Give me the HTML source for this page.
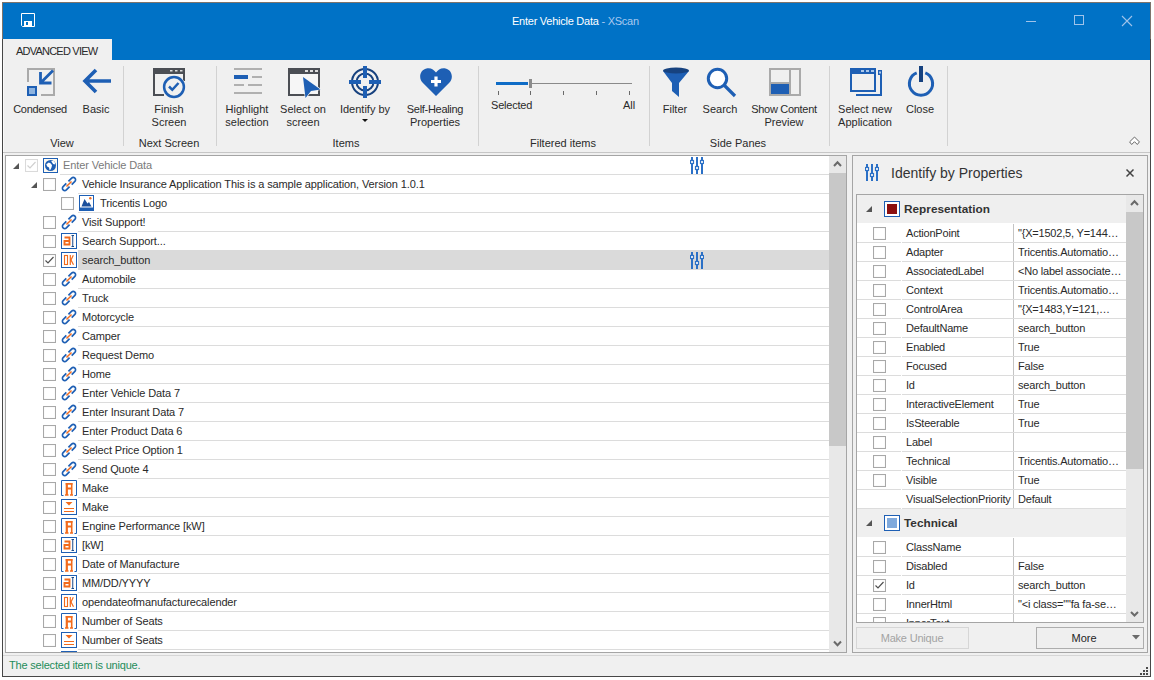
<!DOCTYPE html><html><head><meta charset="utf-8"><style>
html,body{margin:0;padding:0;background:#fff;width:1154px;height:680px;overflow:hidden;position:relative;font-family:"Liberation Sans", sans-serif;}
.t{position:absolute;white-space:nowrap;line-height:0;}
.t.c{width:200px;text-align:center;}
.t::before{content:"";}
svg{display:block}
</style></head><body>
<div style="position:absolute;left:2px;top:2px;width:1149px;height:675px;background:#f0f0f0;box-sizing:border-box;border:1px solid #474747;"></div>
<div style="position:absolute;left:2px;top:2px;width:1149px;height:1px;background:#7d746c;"></div>
<div style="position:absolute;left:2px;top:2px;width:1px;height:37px;background:#7d746c;"></div>
<div style="position:absolute;left:1150px;top:2px;width:1px;height:37px;background:#7d746c;"></div>
<div style="position:absolute;left:3px;top:39px;width:1px;height:613px;background:#fbfbfb;"></div>
<div style="position:absolute;left:3px;top:3px;width:1147px;height:57px;background:#0072c6;"></div>
<svg style="position:absolute;left:21px;top:13px" width="15" height="14" viewBox="0 0 15 14"><path d="M0.5 0.5H13.5V13.5H1.5L0.5 12.5Z" fill="none" stroke="#fff" stroke-width="1"/><rect x="3" y="8" width="8" height="5" fill="#fff"/><rect x="5" y="9" width="2" height="3" fill="#0072c6"/></svg>
<div class="t" style="left:512px;top:21.19px;font-size:11px;color:#ffffff;font-weight:normal;letter-spacing:-0.25px;">Enter Vehicle Data <span style="color:#a9c9ef">- XScan</span></div>
<div style="position:absolute;left:1026px;top:21px;width:10px;height:1px;background:#9fc3ea;"></div>
<div style="position:absolute;left:1074px;top:15px;width:10px;height:10px;box-sizing:border-box;border:1px solid #9fc3ea;"></div>
<svg style="position:absolute;left:1121px;top:15px" width="12" height="12" viewBox="0 0 12 12"><path d="M1 1L11 11M11 1L1 11" stroke="#9fc3ea" stroke-width="1.1"/></svg>
<div style="position:absolute;left:3px;top:39px;width:109px;height:21px;background:#f0f0f0;"></div>
<div class="t" style="left:16px;top:51.19px;font-size:11px;color:#2a2a2a;font-weight:normal;letter-spacing:-0.78px;">ADVANCED VIEW</div>
<div style="position:absolute;left:3px;top:152px;width:1147px;height:1px;background:#c6c6c6;"></div>
<div style="position:absolute;left:123px;top:66px;width:1px;height:80px;background:#d2d2d2;"></div>
<div style="position:absolute;left:216px;top:66px;width:1px;height:80px;background:#d2d2d2;"></div>
<div style="position:absolute;left:478px;top:66px;width:1px;height:80px;background:#d2d2d2;"></div>
<div style="position:absolute;left:649px;top:66px;width:1px;height:80px;background:#d2d2d2;"></div>
<div style="position:absolute;left:829px;top:66px;width:1px;height:80px;background:#d2d2d2;"></div>
<div style="position:absolute;left:947px;top:66px;width:1px;height:80px;background:#d2d2d2;"></div>
<svg style="position:absolute;left:27px;top:68px" width="29" height="29" viewBox="0 0 29 29"><path d="M1 14V1H27V27H14" fill="none" stroke="#aaaaaa" stroke-width="2"/><rect x="1" y="19" width="8" height="8" fill="#8db3df" stroke="#1e5fb4" stroke-width="2"/><path d="M13.5 4V15H24.5M13.5 15L26 2.5" fill="none" stroke="#1e5fb4" stroke-width="2.8"/></svg>
<svg style="position:absolute;left:82px;top:68px" width="30" height="28" viewBox="0 0 30 28"><path d="M14 2L3 13L14 24M3 13H29" fill="none" stroke="#1e5fb4" stroke-width="3.6"/></svg>
<svg style="position:absolute;left:152px;top:67px" width="34" height="32" viewBox="0 0 34 32"><path d="M32 6V14M12 28H2V6" fill="none" stroke="#4b4e54" stroke-width="2"/><rect x="1" y="1" width="32" height="6" fill="#4b4e54"/><rect x="18" y="3" width="2.5" height="1.5" fill="#ddd"/><rect x="23" y="3" width="2.5" height="1.5" fill="#ddd"/><rect x="28" y="3" width="2.5" height="1.5" fill="#ddd"/><circle cx="22" cy="20" r="11.5" fill="#f0f0f0"/><circle cx="22" cy="20" r="9.9" fill="#f0f0f0" stroke="#1e5fb4" stroke-width="2.5"/><path d="M17 19.5L20.3 22.8L26.5 16" fill="none" stroke="#1e5fb4" stroke-width="2.5"/></svg>
<svg style="position:absolute;left:234px;top:68px" width="29" height="27" viewBox="0 0 29 27"><rect x="0" y="0" width="28" height="2" fill="#b0b0b0"/><rect x="0" y="7" width="14" height="4" fill="#1e5fb4"/><rect x="18" y="8" width="10" height="2" fill="#b0b0b0"/><rect x="0" y="16" width="10" height="2" fill="#b0b0b0"/><rect x="14" y="16" width="14" height="2" fill="#b0b0b0"/><rect x="0" y="24" width="28" height="2" fill="#b0b0b0"/></svg>
<svg style="position:absolute;left:287px;top:67px" width="35" height="34" viewBox="0 0 35 34"><rect x="2" y="2" width="30" height="26" fill="#f6f6f6" stroke="#4b4e54" stroke-width="2"/><rect x="1" y="1" width="32" height="6" fill="#4b4e54"/><rect x="18" y="3" width="3" height="2" fill="#ddd"/><rect x="23" y="3" width="3" height="2" fill="#ddd"/><rect x="28" y="3" width="3" height="2" fill="#ddd"/><path d="M16 10L33.5 22.4L24 24L18.5 31Z" fill="#1e5fb4" stroke="#f4f4f4" stroke-width="1.3" stroke-linejoin="round" paint-order="stroke"/></svg>
<svg style="position:absolute;left:348px;top:65px" width="34" height="34" viewBox="0 0 34 34"><circle cx="17" cy="17" r="13" fill="none" stroke="#17427f" stroke-width="2"/><circle cx="17" cy="17" r="8.5" fill="none" stroke="#17427f" stroke-width="2"/><path d="M17 1V13M17 21V33M1 17H13M21 17H33" stroke="#1e5fb4" stroke-width="4"/></svg>
<svg style="position:absolute;left:362px;top:119px" width="6" height="4" viewBox="0 0 6 4"><path d="M0 0H6L3 3Z" fill="#111"/></svg>
<svg style="position:absolute;left:419px;top:67px" width="34" height="30" viewBox="0 0 34 30"><path d="M17 29L3.5 15.5C-0.5 11.5 0.5 3 7.5 1.5C12 0.6 15 3 17 5.5C19 3 22 0.6 26.5 1.5C33.5 3 34.5 11.5 30.5 15.5Z" fill="#1e5fb4"/><path d="M17 9.5V19.5M12 14.5H22" stroke="#fff" stroke-width="3.2"/></svg>
<div style="position:absolute;left:496px;top:82px;width:32px;height:3px;background:#0f6cc6;"></div>
<div style="position:absolute;left:532px;top:83px;width:100px;height:1px;background:#8a8a8a;"></div>
<div style="position:absolute;left:529px;top:79px;width:3px;height:9px;background:#8c8c8c;"></div>
<div style="position:absolute;left:498px;top:91px;width:1px;height:4px;background:#6a6a6a;"></div>
<div style="position:absolute;left:530px;top:91px;width:1px;height:4px;background:#6a6a6a;"></div>
<div style="position:absolute;left:563px;top:91px;width:1px;height:4px;background:#6a6a6a;"></div>
<div style="position:absolute;left:596px;top:91px;width:1px;height:4px;background:#6a6a6a;"></div>
<div style="position:absolute;left:629px;top:91px;width:1px;height:4px;background:#6a6a6a;"></div>
<svg style="position:absolute;left:662px;top:67px" width="28" height="30" viewBox="0 0 28 30"><path d="M1 4L10 16V24L17 30V16L27 4Z" fill="#1e5fb4"/><ellipse cx="14" cy="3.5" rx="13" ry="3" fill="#17427f"/></svg>
<svg style="position:absolute;left:705px;top:66px" width="32" height="32" viewBox="0 0 32 32"><circle cx="12.5" cy="12.5" r="9.2" fill="#fff" stroke="#1e5fb4" stroke-width="3"/><path d="M19 19L30 30" stroke="#1e5fb4" stroke-width="3.2"/></svg>
<svg style="position:absolute;left:769px;top:68px" width="33" height="29" viewBox="0 0 33 29"><rect x="1" y="1" width="30" height="26" fill="none" stroke="#aaaaaa" stroke-width="2"/><path d="M21 1V27M2 15H20" stroke="#aaaaaa" stroke-width="2"/><rect x="2" y="16" width="18" height="10" fill="#1e5fb4"/></svg>
<svg style="position:absolute;left:849px;top:67px" width="34" height="30" viewBox="0 0 34 30"><rect x="2" y="2" width="24" height="22" fill="none" stroke="#1e5fb4" stroke-width="2"/><rect x="1" y="1" width="26" height="6" fill="#1e5fb4"/><rect x="12" y="3" width="3" height="2" fill="#a9c6ea"/><rect x="17" y="3" width="3" height="2" fill="#a9c6ea"/><rect x="22" y="3" width="3" height="2" fill="#a9c6ea"/><rect x="31" y="3" width="2" height="26" fill="#1e5fb4"/><rect x="29" y="3" width="4" height="5" fill="#1e5fb4"/><rect x="30" y="4.5" width="2" height="2" fill="#a9c6ea"/><rect x="7" y="27" width="26" height="2" fill="#1e5fb4"/></svg>
<svg style="position:absolute;left:905px;top:64px" width="32" height="34" viewBox="0 0 32 34"><path d="M11.7 8.8A11.6 11.6 0 1 0 20.3 8.8" fill="none" stroke="#1e5fb4" stroke-width="3"/><rect x="14" y="2" width="4" height="16" fill="#17427f"/></svg>
<div class="t c" style="left:-60px;top:109.19px;font-size:11px;color:#2a2a2a;letter-spacing:-0.3px;">Condensed</div>
<div class="t c" style="left:-4px;top:109.19px;font-size:11px;color:#2a2a2a;">Basic</div>
<div class="t c" style="left:69px;top:109.19px;font-size:11px;color:#2a2a2a;">Finish</div>
<div class="t c" style="left:69px;top:122.19px;font-size:11px;color:#2a2a2a;">Screen</div>
<div class="t c" style="left:147px;top:109.19px;font-size:11px;color:#2a2a2a;">Highlight</div>
<div class="t c" style="left:147px;top:122.19px;font-size:11px;color:#2a2a2a;">selection</div>
<div class="t c" style="left:203px;top:109.19px;font-size:11px;color:#2a2a2a;">Select on</div>
<div class="t c" style="left:203px;top:122.19px;font-size:11px;color:#2a2a2a;">screen</div>
<div class="t c" style="left:265px;top:109.19px;font-size:11px;color:#2a2a2a;">Identify by</div>
<div class="t c" style="left:335px;top:109.19px;font-size:11px;color:#2a2a2a;letter-spacing:-0.3px;">Self-Healing</div>
<div class="t c" style="left:335px;top:122.19px;font-size:11px;color:#2a2a2a;">Properties</div>
<div class="t" style="left:491px;top:105.19px;font-size:11px;color:#2a2a2a;font-weight:normal;letter-spacing:-0.2px;">Selected</div>
<div class="t" style="left:623px;top:105.19px;font-size:11px;color:#2a2a2a;font-weight:normal;">All</div>
<div class="t c" style="left:575px;top:109.19px;font-size:11px;color:#2a2a2a;">Filter</div>
<div class="t c" style="left:620px;top:109.19px;font-size:11px;color:#2a2a2a;">Search</div>
<div class="t c" style="left:684px;top:109.19px;font-size:11px;color:#2a2a2a;letter-spacing:-0.3px;">Show Content</div>
<div class="t c" style="left:684px;top:122.19px;font-size:11px;color:#2a2a2a;">Preview</div>
<div class="t c" style="left:765px;top:109.19px;font-size:11px;color:#2a2a2a;">Select new</div>
<div class="t c" style="left:765px;top:122.19px;font-size:11px;color:#2a2a2a;">Application</div>
<div class="t c" style="left:820px;top:109.19px;font-size:11px;color:#2a2a2a;">Close</div>
<div class="t c" style="left:-38px;top:143.19px;font-size:11px;color:#2a2a2a;">View</div>
<div class="t c" style="left:69px;top:143.19px;font-size:11px;color:#2a2a2a;">Next Screen</div>
<div class="t c" style="left:246px;top:143.19px;font-size:11px;color:#2a2a2a;">Items</div>
<div class="t c" style="left:463px;top:143.19px;font-size:11px;color:#2a2a2a;">Filtered items</div>
<div class="t c" style="left:638px;top:143.19px;font-size:11px;color:#2a2a2a;">Side Panes</div>
<svg style="position:absolute;left:1126px;top:134px" width="17" height="14" viewBox="0 0 17 14"><path d="M8.5 3L13.4 7.9L11.3 10.5L8.5 7.7L5.7 10.5L3.6 7.9Z" fill="#fff" stroke="#666" stroke-width="1"/></svg>
<div style="position:absolute;left:5px;top:155px;width:842px;height:498px;background:#fff;box-sizing:border-box;border:1px solid #a5a5a5;"></div>
<div style="position:absolute;left:829px;top:156px;width:17px;height:496px;background:#e8e8e8;"></div>
<div style="position:absolute;left:829px;top:173px;width:17px;height:273px;background:#c8c8c8;"></div>
<svg style="position:absolute;left:833px;top:159px" width="9" height="9" viewBox="0 0 9 9"><path d="M1 7L4.5 3.2L8 7" fill="none" stroke="#6a6a6a" stroke-width="2"/></svg>
<svg style="position:absolute;left:833px;top:640px" width="9" height="9" viewBox="0 0 9 9"><path d="M1 1.5L4.5 5.3L8 1.5" fill="none" stroke="#6a6a6a" stroke-width="2"/></svg>
<div style="position:absolute;left:6px;top:156px;width:823px;height:496px;overflow:hidden">
<div style="position:absolute;left:54px;top:18px;width:769px;height:1px;background:#dcdcdc;"></div>
<svg style="position:absolute;left:7px;top:7px" width="6" height="6" viewBox="0 0 6 6"><path d="M6 0V6H0Z" fill="#555"/></svg>
<svg style="position:absolute;left:19px;top:3px" width="13" height="13" viewBox="0 0 13 13"><rect x="0.5" y="0.5" width="12" height="12" fill="#fff" stroke="#dadada" stroke-width="1.1"/><path d="M2.5 6.5L5 9L10.5 3" fill="none" stroke="#d0d0d0" stroke-width="1.2"/></svg>
<svg style="position:absolute;left:37px;top:2px" width="15" height="15" viewBox="0 0 15 15"><rect x="0.5" y="0.5" width="14" height="14" fill="#fffaf0" stroke="#1e5fb4" stroke-width="1"/><circle cx="7.5" cy="7.5" r="5.5" fill="#1e5fb4"/><path d="M3.3 6.2L5.8 4.6L7.8 5.6L9 7.2L8.6 9.2L7.6 11.6L6.6 12.2L6 9.6L4.2 8.6Z M8.2 3.1L10.6 2.9L12.3 5.1L11.6 6.6L10.1 6.1L9.1 4.6Z" fill="#fff"/></svg>
<div class="t" style="left:57px;top:9.19px;font-size:11px;color:#7a7a7a;font-weight:normal;letter-spacing:-0.12px;">Enter Vehicle Data</div>
<div style="position:absolute;left:72px;top:37px;width:751px;height:1px;background:#dcdcdc;"></div>
<svg style="position:absolute;left:25px;top:26px" width="6" height="6" viewBox="0 0 6 6"><path d="M6 0V6H0Z" fill="#555"/></svg>
<svg style="position:absolute;left:37px;top:22px" width="13" height="13" viewBox="0 0 13 13"><rect x="0.5" y="0.5" width="12" height="12" fill="#fff" stroke="#a8a8a8" stroke-width="1.1"/></svg>
<svg style="position:absolute;left:55px;top:20px" width="16" height="16" viewBox="0 0 16 16"><g transform="translate(8 8) rotate(-45)"><path d="M1.5 -2.3H6A2.3 2.3 0 0 1 6 2.3H1.5M-1.5 2.3H-6A2.3 2.3 0 0 1 -6 -2.3H-1.5" fill="none" stroke="#1e5fb4" stroke-width="1.7"/><path d="M-3.6 0H3.6" stroke="#f26b1d" stroke-width="1.5"/></g></svg>
<div class="t" style="left:76px;top:28.19px;font-size:11px;color:#2a2a2a;font-weight:normal;letter-spacing:-0.12px;">Vehicle Insurance Application This is a sample application, Version 1.0.1</div>
<div style="position:absolute;left:72px;top:56px;width:751px;height:1px;background:#dcdcdc;"></div>
<svg style="position:absolute;left:55px;top:41px" width="13" height="13" viewBox="0 0 13 13"><rect x="0.5" y="0.5" width="12" height="12" fill="#fff" stroke="#a8a8a8" stroke-width="1.1"/></svg>
<svg style="position:absolute;left:73px;top:39px" width="15" height="16" viewBox="0 0 15 16"><rect x="0.5" y="0.5" width="14" height="15" fill="#fff" stroke="#1e5fb4" stroke-width="1"/><rect x="0" y="12.5" width="15" height="3.5" fill="#1e5fb4"/><path d="M2.5 11.5L5.5 4L8.5 8.5L10 7L12.5 11.5Z" fill="#1a4f9c"/><circle cx="11.3" cy="3.3" r="1.2" fill="#f26b1d"/></svg>
<div class="t" style="left:94px;top:47.19px;font-size:11px;color:#2a2a2a;font-weight:normal;letter-spacing:-0.12px;">Tricentis Logo</div>
<div style="position:absolute;left:72px;top:75px;width:751px;height:1px;background:#dcdcdc;"></div>
<svg style="position:absolute;left:37px;top:60px" width="13" height="13" viewBox="0 0 13 13"><rect x="0.5" y="0.5" width="12" height="12" fill="#fff" stroke="#a8a8a8" stroke-width="1.1"/></svg>
<svg style="position:absolute;left:55px;top:58px" width="16" height="16" viewBox="0 0 16 16"><g transform="translate(8 8) rotate(-45)"><path d="M1.5 -2.3H6A2.3 2.3 0 0 1 6 2.3H1.5M-1.5 2.3H-6A2.3 2.3 0 0 1 -6 -2.3H-1.5" fill="none" stroke="#1e5fb4" stroke-width="1.7"/><path d="M-3.6 0H3.6" stroke="#f26b1d" stroke-width="1.5"/></g></svg>
<div class="t" style="left:76px;top:66.19px;font-size:11px;color:#2a2a2a;font-weight:normal;letter-spacing:-0.12px;">Visit Support!</div>
<div style="position:absolute;left:72px;top:94px;width:751px;height:1px;background:#dcdcdc;"></div>
<svg style="position:absolute;left:37px;top:79px" width="13" height="13" viewBox="0 0 13 13"><rect x="0.5" y="0.5" width="12" height="12" fill="#fff" stroke="#a8a8a8" stroke-width="1.1"/></svg>
<svg style="position:absolute;left:55px;top:77px" width="16" height="16" viewBox="0 0 16 16"><rect x="0.5" y="0.5" width="15" height="15" fill="#fff" stroke="#1e5fb4" stroke-width="1"/><path d="M3.5 4.5H8.5V11.5H3.5V8H8" fill="none" stroke="#f26b1d" stroke-width="1.9"/><path d="M10.5 2.5H13M11.75 2.5V13.5M10.5 13.5H13" fill="none" stroke="#1a4a8a" stroke-width="1"/></svg>
<div class="t" style="left:76px;top:85.19px;font-size:11px;color:#2a2a2a;font-weight:normal;letter-spacing:-0.12px;">Search Support...</div>
<div style="position:absolute;left:72px;top:94px;width:751px;height:20px;background:#dadada;"></div>
<svg style="position:absolute;left:37px;top:98px" width="13" height="13" viewBox="0 0 13 13"><rect x="0.5" y="0.5" width="12" height="12" fill="#fff" stroke="#a8a8a8" stroke-width="1.1"/><path d="M2.5 6.5L5 9L10.5 3" fill="none" stroke="#505050" stroke-width="1.2"/></svg>
<svg style="position:absolute;left:55px;top:96px" width="16" height="16" viewBox="0 0 16 16"><rect x="0.5" y="0.5" width="15" height="15" fill="#fff" stroke="#1e5fb4" stroke-width="1"/><rect x="3.5" y="3.5" width="3" height="9" fill="none" stroke="#f26b1d" stroke-width="1.1"/><path d="M9.3 3V13M12.3 3.2L10 8L12.5 12.8" fill="none" stroke="#f26b1d" stroke-width="1.2"/></svg>
<div class="t" style="left:76px;top:104.19px;font-size:11px;color:#2a2a2a;font-weight:normal;letter-spacing:-0.12px;">search_button</div>
<div style="position:absolute;left:72px;top:132px;width:751px;height:1px;background:#dcdcdc;"></div>
<svg style="position:absolute;left:37px;top:117px" width="13" height="13" viewBox="0 0 13 13"><rect x="0.5" y="0.5" width="12" height="12" fill="#fff" stroke="#a8a8a8" stroke-width="1.1"/></svg>
<svg style="position:absolute;left:55px;top:115px" width="16" height="16" viewBox="0 0 16 16"><g transform="translate(8 8) rotate(-45)"><path d="M1.5 -2.3H6A2.3 2.3 0 0 1 6 2.3H1.5M-1.5 2.3H-6A2.3 2.3 0 0 1 -6 -2.3H-1.5" fill="none" stroke="#1e5fb4" stroke-width="1.7"/><path d="M-3.6 0H3.6" stroke="#f26b1d" stroke-width="1.5"/></g></svg>
<div class="t" style="left:76px;top:123.19px;font-size:11px;color:#2a2a2a;font-weight:normal;letter-spacing:-0.12px;">Automobile</div>
<div style="position:absolute;left:72px;top:151px;width:751px;height:1px;background:#dcdcdc;"></div>
<svg style="position:absolute;left:37px;top:136px" width="13" height="13" viewBox="0 0 13 13"><rect x="0.5" y="0.5" width="12" height="12" fill="#fff" stroke="#a8a8a8" stroke-width="1.1"/></svg>
<svg style="position:absolute;left:55px;top:134px" width="16" height="16" viewBox="0 0 16 16"><g transform="translate(8 8) rotate(-45)"><path d="M1.5 -2.3H6A2.3 2.3 0 0 1 6 2.3H1.5M-1.5 2.3H-6A2.3 2.3 0 0 1 -6 -2.3H-1.5" fill="none" stroke="#1e5fb4" stroke-width="1.7"/><path d="M-3.6 0H3.6" stroke="#f26b1d" stroke-width="1.5"/></g></svg>
<div class="t" style="left:76px;top:142.19px;font-size:11px;color:#2a2a2a;font-weight:normal;letter-spacing:-0.12px;">Truck</div>
<div style="position:absolute;left:72px;top:170px;width:751px;height:1px;background:#dcdcdc;"></div>
<svg style="position:absolute;left:37px;top:155px" width="13" height="13" viewBox="0 0 13 13"><rect x="0.5" y="0.5" width="12" height="12" fill="#fff" stroke="#a8a8a8" stroke-width="1.1"/></svg>
<svg style="position:absolute;left:55px;top:153px" width="16" height="16" viewBox="0 0 16 16"><g transform="translate(8 8) rotate(-45)"><path d="M1.5 -2.3H6A2.3 2.3 0 0 1 6 2.3H1.5M-1.5 2.3H-6A2.3 2.3 0 0 1 -6 -2.3H-1.5" fill="none" stroke="#1e5fb4" stroke-width="1.7"/><path d="M-3.6 0H3.6" stroke="#f26b1d" stroke-width="1.5"/></g></svg>
<div class="t" style="left:76px;top:161.19px;font-size:11px;color:#2a2a2a;font-weight:normal;letter-spacing:-0.12px;">Motorcycle</div>
<div style="position:absolute;left:72px;top:189px;width:751px;height:1px;background:#dcdcdc;"></div>
<svg style="position:absolute;left:37px;top:174px" width="13" height="13" viewBox="0 0 13 13"><rect x="0.5" y="0.5" width="12" height="12" fill="#fff" stroke="#a8a8a8" stroke-width="1.1"/></svg>
<svg style="position:absolute;left:55px;top:172px" width="16" height="16" viewBox="0 0 16 16"><g transform="translate(8 8) rotate(-45)"><path d="M1.5 -2.3H6A2.3 2.3 0 0 1 6 2.3H1.5M-1.5 2.3H-6A2.3 2.3 0 0 1 -6 -2.3H-1.5" fill="none" stroke="#1e5fb4" stroke-width="1.7"/><path d="M-3.6 0H3.6" stroke="#f26b1d" stroke-width="1.5"/></g></svg>
<div class="t" style="left:76px;top:180.19px;font-size:11px;color:#2a2a2a;font-weight:normal;letter-spacing:-0.12px;">Camper</div>
<div style="position:absolute;left:72px;top:208px;width:751px;height:1px;background:#dcdcdc;"></div>
<svg style="position:absolute;left:37px;top:193px" width="13" height="13" viewBox="0 0 13 13"><rect x="0.5" y="0.5" width="12" height="12" fill="#fff" stroke="#a8a8a8" stroke-width="1.1"/></svg>
<svg style="position:absolute;left:55px;top:191px" width="16" height="16" viewBox="0 0 16 16"><g transform="translate(8 8) rotate(-45)"><path d="M1.5 -2.3H6A2.3 2.3 0 0 1 6 2.3H1.5M-1.5 2.3H-6A2.3 2.3 0 0 1 -6 -2.3H-1.5" fill="none" stroke="#1e5fb4" stroke-width="1.7"/><path d="M-3.6 0H3.6" stroke="#f26b1d" stroke-width="1.5"/></g></svg>
<div class="t" style="left:76px;top:199.19px;font-size:11px;color:#2a2a2a;font-weight:normal;letter-spacing:-0.12px;">Request Demo</div>
<div style="position:absolute;left:72px;top:227px;width:751px;height:1px;background:#dcdcdc;"></div>
<svg style="position:absolute;left:37px;top:212px" width="13" height="13" viewBox="0 0 13 13"><rect x="0.5" y="0.5" width="12" height="12" fill="#fff" stroke="#a8a8a8" stroke-width="1.1"/></svg>
<svg style="position:absolute;left:55px;top:210px" width="16" height="16" viewBox="0 0 16 16"><g transform="translate(8 8) rotate(-45)"><path d="M1.5 -2.3H6A2.3 2.3 0 0 1 6 2.3H1.5M-1.5 2.3H-6A2.3 2.3 0 0 1 -6 -2.3H-1.5" fill="none" stroke="#1e5fb4" stroke-width="1.7"/><path d="M-3.6 0H3.6" stroke="#f26b1d" stroke-width="1.5"/></g></svg>
<div class="t" style="left:76px;top:218.19px;font-size:11px;color:#2a2a2a;font-weight:normal;letter-spacing:-0.12px;">Home</div>
<div style="position:absolute;left:72px;top:246px;width:751px;height:1px;background:#dcdcdc;"></div>
<svg style="position:absolute;left:37px;top:231px" width="13" height="13" viewBox="0 0 13 13"><rect x="0.5" y="0.5" width="12" height="12" fill="#fff" stroke="#a8a8a8" stroke-width="1.1"/></svg>
<svg style="position:absolute;left:55px;top:229px" width="16" height="16" viewBox="0 0 16 16"><g transform="translate(8 8) rotate(-45)"><path d="M1.5 -2.3H6A2.3 2.3 0 0 1 6 2.3H1.5M-1.5 2.3H-6A2.3 2.3 0 0 1 -6 -2.3H-1.5" fill="none" stroke="#1e5fb4" stroke-width="1.7"/><path d="M-3.6 0H3.6" stroke="#f26b1d" stroke-width="1.5"/></g></svg>
<div class="t" style="left:76px;top:237.19px;font-size:11px;color:#2a2a2a;font-weight:normal;letter-spacing:-0.12px;">Enter Vehicle Data 7</div>
<div style="position:absolute;left:72px;top:265px;width:751px;height:1px;background:#dcdcdc;"></div>
<svg style="position:absolute;left:37px;top:250px" width="13" height="13" viewBox="0 0 13 13"><rect x="0.5" y="0.5" width="12" height="12" fill="#fff" stroke="#a8a8a8" stroke-width="1.1"/></svg>
<svg style="position:absolute;left:55px;top:248px" width="16" height="16" viewBox="0 0 16 16"><g transform="translate(8 8) rotate(-45)"><path d="M1.5 -2.3H6A2.3 2.3 0 0 1 6 2.3H1.5M-1.5 2.3H-6A2.3 2.3 0 0 1 -6 -2.3H-1.5" fill="none" stroke="#1e5fb4" stroke-width="1.7"/><path d="M-3.6 0H3.6" stroke="#f26b1d" stroke-width="1.5"/></g></svg>
<div class="t" style="left:76px;top:256.19px;font-size:11px;color:#2a2a2a;font-weight:normal;letter-spacing:-0.12px;">Enter Insurant Data 7</div>
<div style="position:absolute;left:72px;top:284px;width:751px;height:1px;background:#dcdcdc;"></div>
<svg style="position:absolute;left:37px;top:269px" width="13" height="13" viewBox="0 0 13 13"><rect x="0.5" y="0.5" width="12" height="12" fill="#fff" stroke="#a8a8a8" stroke-width="1.1"/></svg>
<svg style="position:absolute;left:55px;top:267px" width="16" height="16" viewBox="0 0 16 16"><g transform="translate(8 8) rotate(-45)"><path d="M1.5 -2.3H6A2.3 2.3 0 0 1 6 2.3H1.5M-1.5 2.3H-6A2.3 2.3 0 0 1 -6 -2.3H-1.5" fill="none" stroke="#1e5fb4" stroke-width="1.7"/><path d="M-3.6 0H3.6" stroke="#f26b1d" stroke-width="1.5"/></g></svg>
<div class="t" style="left:76px;top:275.19px;font-size:11px;color:#2a2a2a;font-weight:normal;letter-spacing:-0.12px;">Enter Product Data 6</div>
<div style="position:absolute;left:72px;top:303px;width:751px;height:1px;background:#dcdcdc;"></div>
<svg style="position:absolute;left:37px;top:288px" width="13" height="13" viewBox="0 0 13 13"><rect x="0.5" y="0.5" width="12" height="12" fill="#fff" stroke="#a8a8a8" stroke-width="1.1"/></svg>
<svg style="position:absolute;left:55px;top:286px" width="16" height="16" viewBox="0 0 16 16"><g transform="translate(8 8) rotate(-45)"><path d="M1.5 -2.3H6A2.3 2.3 0 0 1 6 2.3H1.5M-1.5 2.3H-6A2.3 2.3 0 0 1 -6 -2.3H-1.5" fill="none" stroke="#1e5fb4" stroke-width="1.7"/><path d="M-3.6 0H3.6" stroke="#f26b1d" stroke-width="1.5"/></g></svg>
<div class="t" style="left:76px;top:294.19px;font-size:11px;color:#2a2a2a;font-weight:normal;letter-spacing:-0.12px;">Select Price Option 1</div>
<div style="position:absolute;left:72px;top:322px;width:751px;height:1px;background:#dcdcdc;"></div>
<svg style="position:absolute;left:37px;top:307px" width="13" height="13" viewBox="0 0 13 13"><rect x="0.5" y="0.5" width="12" height="12" fill="#fff" stroke="#a8a8a8" stroke-width="1.1"/></svg>
<svg style="position:absolute;left:55px;top:305px" width="16" height="16" viewBox="0 0 16 16"><g transform="translate(8 8) rotate(-45)"><path d="M1.5 -2.3H6A2.3 2.3 0 0 1 6 2.3H1.5M-1.5 2.3H-6A2.3 2.3 0 0 1 -6 -2.3H-1.5" fill="none" stroke="#1e5fb4" stroke-width="1.7"/><path d="M-3.6 0H3.6" stroke="#f26b1d" stroke-width="1.5"/></g></svg>
<div class="t" style="left:76px;top:313.19px;font-size:11px;color:#2a2a2a;font-weight:normal;letter-spacing:-0.12px;">Send Quote 4</div>
<div style="position:absolute;left:72px;top:341px;width:751px;height:1px;background:#dcdcdc;"></div>
<svg style="position:absolute;left:37px;top:326px" width="13" height="13" viewBox="0 0 13 13"><rect x="0.5" y="0.5" width="12" height="12" fill="#fff" stroke="#a8a8a8" stroke-width="1.1"/></svg>
<svg style="position:absolute;left:55px;top:324px" width="16" height="16" viewBox="0 0 16 16"><path d="M2.5 15.5H0.5V0.5H15.5V15.5H13.5" fill="none" stroke="#1e5fb4" stroke-width="1"/><path d="M5.8 3V15" stroke="#f26b1d" stroke-width="2.2"/><path d="M10.7 3V15" stroke="#f26b1d" stroke-width="1.6"/><path d="M4.7 3.9H11.5M5.5 8.5H10.5" stroke="#f26b1d" stroke-width="1.8"/><path d="M4 15H7.5M9 15H12" stroke="#f26b1d" stroke-width="1.4"/></svg>
<div class="t" style="left:76px;top:332.19px;font-size:11px;color:#2a2a2a;font-weight:normal;letter-spacing:-0.12px;">Make</div>
<div style="position:absolute;left:72px;top:360px;width:751px;height:1px;background:#dcdcdc;"></div>
<svg style="position:absolute;left:37px;top:345px" width="13" height="13" viewBox="0 0 13 13"><rect x="0.5" y="0.5" width="12" height="12" fill="#fff" stroke="#a8a8a8" stroke-width="1.1"/></svg>
<svg style="position:absolute;left:55px;top:343px" width="16" height="16" viewBox="0 0 16 16"><rect x="0.5" y="0.5" width="15" height="15" fill="#fff" stroke="#1e5fb4" stroke-width="1"/><path d="M4.5 3H11.5L8 6.5Z" fill="#f26b1d"/><path d="M3 9.5H13M3 12.5H13" stroke="#f26b1d" stroke-width="1"/></svg>
<div class="t" style="left:76px;top:351.19px;font-size:11px;color:#2a2a2a;font-weight:normal;letter-spacing:-0.12px;">Make</div>
<div style="position:absolute;left:72px;top:379px;width:751px;height:1px;background:#dcdcdc;"></div>
<svg style="position:absolute;left:37px;top:364px" width="13" height="13" viewBox="0 0 13 13"><rect x="0.5" y="0.5" width="12" height="12" fill="#fff" stroke="#a8a8a8" stroke-width="1.1"/></svg>
<svg style="position:absolute;left:55px;top:362px" width="16" height="16" viewBox="0 0 16 16"><path d="M2.5 15.5H0.5V0.5H15.5V15.5H13.5" fill="none" stroke="#1e5fb4" stroke-width="1"/><path d="M5.8 3V15" stroke="#f26b1d" stroke-width="2.2"/><path d="M10.7 3V15" stroke="#f26b1d" stroke-width="1.6"/><path d="M4.7 3.9H11.5M5.5 8.5H10.5" stroke="#f26b1d" stroke-width="1.8"/><path d="M4 15H7.5M9 15H12" stroke="#f26b1d" stroke-width="1.4"/></svg>
<div class="t" style="left:76px;top:370.19px;font-size:11px;color:#2a2a2a;font-weight:normal;letter-spacing:-0.12px;">Engine Performance [kW]</div>
<div style="position:absolute;left:72px;top:398px;width:751px;height:1px;background:#dcdcdc;"></div>
<svg style="position:absolute;left:37px;top:383px" width="13" height="13" viewBox="0 0 13 13"><rect x="0.5" y="0.5" width="12" height="12" fill="#fff" stroke="#a8a8a8" stroke-width="1.1"/></svg>
<svg style="position:absolute;left:55px;top:381px" width="16" height="16" viewBox="0 0 16 16"><rect x="0.5" y="0.5" width="15" height="15" fill="#fff" stroke="#1e5fb4" stroke-width="1"/><path d="M3.5 4.5H8.5V11.5H3.5V8H8" fill="none" stroke="#f26b1d" stroke-width="1.9"/><path d="M10.5 2.5H13M11.75 2.5V13.5M10.5 13.5H13" fill="none" stroke="#1a4a8a" stroke-width="1"/></svg>
<div class="t" style="left:76px;top:389.19px;font-size:11px;color:#2a2a2a;font-weight:normal;letter-spacing:-0.12px;">[kW]</div>
<div style="position:absolute;left:72px;top:417px;width:751px;height:1px;background:#dcdcdc;"></div>
<svg style="position:absolute;left:37px;top:402px" width="13" height="13" viewBox="0 0 13 13"><rect x="0.5" y="0.5" width="12" height="12" fill="#fff" stroke="#a8a8a8" stroke-width="1.1"/></svg>
<svg style="position:absolute;left:55px;top:400px" width="16" height="16" viewBox="0 0 16 16"><path d="M2.5 15.5H0.5V0.5H15.5V15.5H13.5" fill="none" stroke="#1e5fb4" stroke-width="1"/><path d="M5.8 3V15" stroke="#f26b1d" stroke-width="2.2"/><path d="M10.7 3V15" stroke="#f26b1d" stroke-width="1.6"/><path d="M4.7 3.9H11.5M5.5 8.5H10.5" stroke="#f26b1d" stroke-width="1.8"/><path d="M4 15H7.5M9 15H12" stroke="#f26b1d" stroke-width="1.4"/></svg>
<div class="t" style="left:76px;top:408.19px;font-size:11px;color:#2a2a2a;font-weight:normal;letter-spacing:-0.12px;">Date of Manufacture</div>
<div style="position:absolute;left:72px;top:436px;width:751px;height:1px;background:#dcdcdc;"></div>
<svg style="position:absolute;left:37px;top:421px" width="13" height="13" viewBox="0 0 13 13"><rect x="0.5" y="0.5" width="12" height="12" fill="#fff" stroke="#a8a8a8" stroke-width="1.1"/></svg>
<svg style="position:absolute;left:55px;top:419px" width="16" height="16" viewBox="0 0 16 16"><rect x="0.5" y="0.5" width="15" height="15" fill="#fff" stroke="#1e5fb4" stroke-width="1"/><path d="M3.5 4.5H8.5V11.5H3.5V8H8" fill="none" stroke="#f26b1d" stroke-width="1.9"/><path d="M10.5 2.5H13M11.75 2.5V13.5M10.5 13.5H13" fill="none" stroke="#1a4a8a" stroke-width="1"/></svg>
<div class="t" style="left:76px;top:427.19px;font-size:11px;color:#2a2a2a;font-weight:normal;letter-spacing:-0.12px;">MM/DD/YYYY</div>
<div style="position:absolute;left:72px;top:455px;width:751px;height:1px;background:#dcdcdc;"></div>
<svg style="position:absolute;left:37px;top:440px" width="13" height="13" viewBox="0 0 13 13"><rect x="0.5" y="0.5" width="12" height="12" fill="#fff" stroke="#a8a8a8" stroke-width="1.1"/></svg>
<svg style="position:absolute;left:55px;top:438px" width="16" height="16" viewBox="0 0 16 16"><rect x="0.5" y="0.5" width="15" height="15" fill="#fff" stroke="#1e5fb4" stroke-width="1"/><rect x="3.5" y="3.5" width="3" height="9" fill="none" stroke="#f26b1d" stroke-width="1.1"/><path d="M9.3 3V13M12.3 3.2L10 8L12.5 12.8" fill="none" stroke="#f26b1d" stroke-width="1.2"/></svg>
<div class="t" style="left:76px;top:446.19px;font-size:11px;color:#2a2a2a;font-weight:normal;letter-spacing:-0.12px;">opendateofmanufacturecalender</div>
<div style="position:absolute;left:72px;top:474px;width:751px;height:1px;background:#dcdcdc;"></div>
<svg style="position:absolute;left:37px;top:459px" width="13" height="13" viewBox="0 0 13 13"><rect x="0.5" y="0.5" width="12" height="12" fill="#fff" stroke="#a8a8a8" stroke-width="1.1"/></svg>
<svg style="position:absolute;left:55px;top:457px" width="16" height="16" viewBox="0 0 16 16"><path d="M2.5 15.5H0.5V0.5H15.5V15.5H13.5" fill="none" stroke="#1e5fb4" stroke-width="1"/><path d="M5.8 3V15" stroke="#f26b1d" stroke-width="2.2"/><path d="M10.7 3V15" stroke="#f26b1d" stroke-width="1.6"/><path d="M4.7 3.9H11.5M5.5 8.5H10.5" stroke="#f26b1d" stroke-width="1.8"/><path d="M4 15H7.5M9 15H12" stroke="#f26b1d" stroke-width="1.4"/></svg>
<div class="t" style="left:76px;top:465.19px;font-size:11px;color:#2a2a2a;font-weight:normal;letter-spacing:-0.12px;">Number of Seats</div>
<div style="position:absolute;left:72px;top:493px;width:751px;height:1px;background:#dcdcdc;"></div>
<svg style="position:absolute;left:37px;top:478px" width="13" height="13" viewBox="0 0 13 13"><rect x="0.5" y="0.5" width="12" height="12" fill="#fff" stroke="#a8a8a8" stroke-width="1.1"/></svg>
<svg style="position:absolute;left:55px;top:476px" width="16" height="16" viewBox="0 0 16 16"><rect x="0.5" y="0.5" width="15" height="15" fill="#fff" stroke="#1e5fb4" stroke-width="1"/><path d="M4.5 3H11.5L8 6.5Z" fill="#f26b1d"/><path d="M3 9.5H13M3 12.5H13" stroke="#f26b1d" stroke-width="1"/></svg>
<div class="t" style="left:76px;top:484.19px;font-size:11px;color:#2a2a2a;font-weight:normal;letter-spacing:-0.12px;">Number of Seats</div>
<svg style="position:absolute;left:55px;top:495px" width="16" height="16" viewBox="0 0 16 16"><rect x="0.5" y="0.5" width="15" height="15" fill="#fff" stroke="#1e5fb4" stroke-width="1"/><path d="M4.5 3H11.5L8 6.5Z" fill="#f26b1d"/><path d="M3 9.5H13M3 12.5H13" stroke="#f26b1d" stroke-width="1"/></svg>
<svg style="position:absolute;left:684px;top:1px" width="14" height="17" viewBox="0 0 14 17"><path d="M2 0V17M7 0V17M12 0V17" stroke="#2b70c6" stroke-width="2"/><rect x="0.5" y="3.5" width="3" height="3" fill="#fff" stroke="#2b70c6" stroke-width="1.2"/><rect x="5.5" y="9.5" width="3" height="3" fill="#fff" stroke="#2b70c6" stroke-width="1.2"/><rect x="10.5" y="3.5" width="3" height="3" fill="#fff" stroke="#2b70c6" stroke-width="1.2"/></svg>
<svg style="position:absolute;left:684px;top:96px" width="14" height="17" viewBox="0 0 14 17"><path d="M2 0V17M7 0V17M12 0V17" stroke="#2b70c6" stroke-width="2"/><rect x="0.5" y="3.5" width="3" height="3" fill="#fff" stroke="#2b70c6" stroke-width="1.2"/><rect x="5.5" y="9.5" width="3" height="3" fill="#fff" stroke="#2b70c6" stroke-width="1.2"/><rect x="10.5" y="3.5" width="3" height="3" fill="#fff" stroke="#2b70c6" stroke-width="1.2"/></svg>
</div>
<div style="position:absolute;left:852px;top:155px;width:296px;height:498px;background:#f0f0f0;box-sizing:border-box;border:1px solid #a5a5a5;"></div>
<svg style="position:absolute;left:865px;top:164px" width="14" height="17" viewBox="0 0 14 17"><path d="M2 0V17M7 0V17M12 0V17" stroke="#2b70c6" stroke-width="2"/><rect x="0.5" y="3.5" width="3" height="3" fill="#fff" stroke="#2b70c6" stroke-width="1.2"/><rect x="5.5" y="9.5" width="3" height="3" fill="#fff" stroke="#2b70c6" stroke-width="1.2"/><rect x="10.5" y="3.5" width="3" height="3" fill="#fff" stroke="#2b70c6" stroke-width="1.2"/></svg>
<div class="t" style="left:891px;top:173.15px;font-size:14px;color:#333333;font-weight:normal;letter-spacing:0px;">Identify by Properties</div>
<svg style="position:absolute;left:1125px;top:168px" width="10" height="10" viewBox="0 0 10 10"><path d="M1.5 1.5L8.5 8.5M8.5 1.5L1.5 8.5" stroke="#444" stroke-width="1.5"/></svg>
<div style="position:absolute;left:856px;top:194px;width:288px;height:429px;background:#fff;box-sizing:border-box;border:1px solid #a5a5a5;"></div>
<div style="position:absolute;left:1126px;top:195px;width:17px;height:427px;background:#e8e8e8;"></div>
<div style="position:absolute;left:1126px;top:212px;width:17px;height:257px;background:#c8c8c8;"></div>
<svg style="position:absolute;left:1130px;top:198px" width="9" height="9" viewBox="0 0 9 9"><path d="M1 7L4.5 3.2L8 7" fill="none" stroke="#6a6a6a" stroke-width="2"/></svg>
<svg style="position:absolute;left:1130px;top:611px" width="9" height="7" viewBox="0 0 9 7"><path d="M1 1L4.5 4.5L8 1" fill="none" stroke="#6a6a6a" stroke-width="2"/></svg>
<div style="position:absolute;left:857px;top:195px;width:269px;height:427px;overflow:hidden">
<div style="position:absolute;left:0px;top:0px;width:269px;height:28px;background:#efefef;"></div>
<svg style="position:absolute;left:9px;top:11px" width="6" height="6" viewBox="0 0 6 6"><path d="M6 0V6H0Z" fill="#555"/></svg>
<svg style="position:absolute;left:27px;top:6px" width="16" height="16" viewBox="0 0 16 16"><rect x="0.5" y="0.5" width="15" height="15" fill="#fff" stroke="#1e5fb4" stroke-width="1"/><rect x="3" y="3" width="10" height="10" fill="#8b0f0f"/></svg>
<div class="t" style="left:47px;top:13.91px;font-size:11.8px;color:#333;font-weight:bold;letter-spacing:0px;">Representation</div>
<svg style="position:absolute;left:16px;top:32px" width="13" height="13" viewBox="0 0 13 13"><rect x="0.5" y="0.5" width="12" height="12" fill="#fff" stroke="#a8a8a8" stroke-width="1.1"/></svg>
<div class="t" style="left:49px;top:38.19px;font-size:11px;color:#2a2a2a;font-weight:normal;letter-spacing:-0.2px;">ActionPoint</div>
<div class="t" style="left:161px;top:38.19px;font-size:11px;color:#2a2a2a;font-weight:normal;letter-spacing:-0.2px;">"{X=1502,5, Y=144&#8230;</div>
<div style="position:absolute;left:0px;top:47px;width:44px;height:1px;background:#dcdcdc;"></div>
<div style="position:absolute;left:45px;top:47px;width:224px;height:1px;background:#dcdcdc;"></div>
<div style="position:absolute;left:156px;top:29px;width:1px;height:18px;background:#c4c4c4;"></div>
<svg style="position:absolute;left:16px;top:51px" width="13" height="13" viewBox="0 0 13 13"><rect x="0.5" y="0.5" width="12" height="12" fill="#fff" stroke="#a8a8a8" stroke-width="1.1"/></svg>
<div class="t" style="left:49px;top:57.19px;font-size:11px;color:#2a2a2a;font-weight:normal;letter-spacing:-0.2px;">Adapter</div>
<div class="t" style="left:161px;top:57.19px;font-size:11px;color:#2a2a2a;font-weight:normal;letter-spacing:-0.2px;">Tricentis.Automatio&#8230;</div>
<div style="position:absolute;left:0px;top:66px;width:44px;height:1px;background:#dcdcdc;"></div>
<div style="position:absolute;left:45px;top:66px;width:224px;height:1px;background:#dcdcdc;"></div>
<div style="position:absolute;left:156px;top:48px;width:1px;height:18px;background:#c4c4c4;"></div>
<svg style="position:absolute;left:16px;top:70px" width="13" height="13" viewBox="0 0 13 13"><rect x="0.5" y="0.5" width="12" height="12" fill="#fff" stroke="#a8a8a8" stroke-width="1.1"/></svg>
<div class="t" style="left:49px;top:76.19px;font-size:11px;color:#2a2a2a;font-weight:normal;letter-spacing:-0.2px;">AssociatedLabel</div>
<div class="t" style="left:161px;top:76.19px;font-size:11px;color:#2a2a2a;font-weight:normal;letter-spacing:-0.2px;">&lt;No label associate&#8230;</div>
<div style="position:absolute;left:0px;top:85px;width:44px;height:1px;background:#dcdcdc;"></div>
<div style="position:absolute;left:45px;top:85px;width:224px;height:1px;background:#dcdcdc;"></div>
<div style="position:absolute;left:156px;top:67px;width:1px;height:18px;background:#c4c4c4;"></div>
<svg style="position:absolute;left:16px;top:89px" width="13" height="13" viewBox="0 0 13 13"><rect x="0.5" y="0.5" width="12" height="12" fill="#fff" stroke="#a8a8a8" stroke-width="1.1"/></svg>
<div class="t" style="left:49px;top:95.19px;font-size:11px;color:#2a2a2a;font-weight:normal;letter-spacing:-0.2px;">Context</div>
<div class="t" style="left:161px;top:95.19px;font-size:11px;color:#2a2a2a;font-weight:normal;letter-spacing:-0.2px;">Tricentis.Automatio&#8230;</div>
<div style="position:absolute;left:0px;top:104px;width:44px;height:1px;background:#dcdcdc;"></div>
<div style="position:absolute;left:45px;top:104px;width:224px;height:1px;background:#dcdcdc;"></div>
<div style="position:absolute;left:156px;top:86px;width:1px;height:18px;background:#c4c4c4;"></div>
<svg style="position:absolute;left:16px;top:108px" width="13" height="13" viewBox="0 0 13 13"><rect x="0.5" y="0.5" width="12" height="12" fill="#fff" stroke="#a8a8a8" stroke-width="1.1"/></svg>
<div class="t" style="left:49px;top:114.19px;font-size:11px;color:#2a2a2a;font-weight:normal;letter-spacing:-0.2px;">ControlArea</div>
<div class="t" style="left:161px;top:114.19px;font-size:11px;color:#2a2a2a;font-weight:normal;letter-spacing:-0.2px;">"{X=1483,Y=121,&#8230;</div>
<div style="position:absolute;left:0px;top:123px;width:44px;height:1px;background:#dcdcdc;"></div>
<div style="position:absolute;left:45px;top:123px;width:224px;height:1px;background:#dcdcdc;"></div>
<div style="position:absolute;left:156px;top:105px;width:1px;height:18px;background:#c4c4c4;"></div>
<svg style="position:absolute;left:16px;top:127px" width="13" height="13" viewBox="0 0 13 13"><rect x="0.5" y="0.5" width="12" height="12" fill="#fff" stroke="#a8a8a8" stroke-width="1.1"/></svg>
<div class="t" style="left:49px;top:133.19px;font-size:11px;color:#2a2a2a;font-weight:normal;letter-spacing:-0.2px;">DefaultName</div>
<div class="t" style="left:161px;top:133.19px;font-size:11px;color:#2a2a2a;font-weight:normal;letter-spacing:-0.2px;">search_button</div>
<div style="position:absolute;left:0px;top:142px;width:44px;height:1px;background:#dcdcdc;"></div>
<div style="position:absolute;left:45px;top:142px;width:224px;height:1px;background:#dcdcdc;"></div>
<div style="position:absolute;left:156px;top:124px;width:1px;height:18px;background:#c4c4c4;"></div>
<svg style="position:absolute;left:16px;top:146px" width="13" height="13" viewBox="0 0 13 13"><rect x="0.5" y="0.5" width="12" height="12" fill="#fff" stroke="#a8a8a8" stroke-width="1.1"/></svg>
<div class="t" style="left:49px;top:152.19px;font-size:11px;color:#2a2a2a;font-weight:normal;letter-spacing:-0.2px;">Enabled</div>
<div class="t" style="left:161px;top:152.19px;font-size:11px;color:#2a2a2a;font-weight:normal;letter-spacing:-0.2px;">True</div>
<div style="position:absolute;left:0px;top:161px;width:44px;height:1px;background:#dcdcdc;"></div>
<div style="position:absolute;left:45px;top:161px;width:224px;height:1px;background:#dcdcdc;"></div>
<div style="position:absolute;left:156px;top:143px;width:1px;height:18px;background:#c4c4c4;"></div>
<svg style="position:absolute;left:16px;top:165px" width="13" height="13" viewBox="0 0 13 13"><rect x="0.5" y="0.5" width="12" height="12" fill="#fff" stroke="#a8a8a8" stroke-width="1.1"/></svg>
<div class="t" style="left:49px;top:171.19px;font-size:11px;color:#2a2a2a;font-weight:normal;letter-spacing:-0.2px;">Focused</div>
<div class="t" style="left:161px;top:171.19px;font-size:11px;color:#2a2a2a;font-weight:normal;letter-spacing:-0.2px;">False</div>
<div style="position:absolute;left:0px;top:180px;width:44px;height:1px;background:#dcdcdc;"></div>
<div style="position:absolute;left:45px;top:180px;width:224px;height:1px;background:#dcdcdc;"></div>
<div style="position:absolute;left:156px;top:162px;width:1px;height:18px;background:#c4c4c4;"></div>
<svg style="position:absolute;left:16px;top:184px" width="13" height="13" viewBox="0 0 13 13"><rect x="0.5" y="0.5" width="12" height="12" fill="#fff" stroke="#a8a8a8" stroke-width="1.1"/></svg>
<div class="t" style="left:49px;top:190.19px;font-size:11px;color:#2a2a2a;font-weight:normal;letter-spacing:-0.2px;">Id</div>
<div class="t" style="left:161px;top:190.19px;font-size:11px;color:#2a2a2a;font-weight:normal;letter-spacing:-0.2px;">search_button</div>
<div style="position:absolute;left:0px;top:199px;width:44px;height:1px;background:#dcdcdc;"></div>
<div style="position:absolute;left:45px;top:199px;width:224px;height:1px;background:#dcdcdc;"></div>
<div style="position:absolute;left:156px;top:181px;width:1px;height:18px;background:#c4c4c4;"></div>
<svg style="position:absolute;left:16px;top:203px" width="13" height="13" viewBox="0 0 13 13"><rect x="0.5" y="0.5" width="12" height="12" fill="#fff" stroke="#a8a8a8" stroke-width="1.1"/></svg>
<div class="t" style="left:49px;top:209.19px;font-size:11px;color:#2a2a2a;font-weight:normal;letter-spacing:-0.2px;">InteractiveElement</div>
<div class="t" style="left:161px;top:209.19px;font-size:11px;color:#2a2a2a;font-weight:normal;letter-spacing:-0.2px;">True</div>
<div style="position:absolute;left:0px;top:218px;width:44px;height:1px;background:#dcdcdc;"></div>
<div style="position:absolute;left:45px;top:218px;width:224px;height:1px;background:#dcdcdc;"></div>
<div style="position:absolute;left:156px;top:200px;width:1px;height:18px;background:#c4c4c4;"></div>
<svg style="position:absolute;left:16px;top:222px" width="13" height="13" viewBox="0 0 13 13"><rect x="0.5" y="0.5" width="12" height="12" fill="#fff" stroke="#a8a8a8" stroke-width="1.1"/></svg>
<div class="t" style="left:49px;top:228.19px;font-size:11px;color:#2a2a2a;font-weight:normal;letter-spacing:-0.2px;">IsSteerable</div>
<div class="t" style="left:161px;top:228.19px;font-size:11px;color:#2a2a2a;font-weight:normal;letter-spacing:-0.2px;">True</div>
<div style="position:absolute;left:0px;top:237px;width:44px;height:1px;background:#dcdcdc;"></div>
<div style="position:absolute;left:45px;top:237px;width:224px;height:1px;background:#dcdcdc;"></div>
<div style="position:absolute;left:156px;top:219px;width:1px;height:18px;background:#c4c4c4;"></div>
<svg style="position:absolute;left:16px;top:241px" width="13" height="13" viewBox="0 0 13 13"><rect x="0.5" y="0.5" width="12" height="12" fill="#fff" stroke="#a8a8a8" stroke-width="1.1"/></svg>
<div class="t" style="left:49px;top:247.19px;font-size:11px;color:#2a2a2a;font-weight:normal;letter-spacing:-0.2px;">Label</div>
<div class="t" style="left:161px;top:247.19px;font-size:11px;color:#2a2a2a;font-weight:normal;letter-spacing:-0.2px;"></div>
<div style="position:absolute;left:0px;top:256px;width:44px;height:1px;background:#dcdcdc;"></div>
<div style="position:absolute;left:45px;top:256px;width:224px;height:1px;background:#dcdcdc;"></div>
<div style="position:absolute;left:156px;top:238px;width:1px;height:18px;background:#c4c4c4;"></div>
<svg style="position:absolute;left:16px;top:260px" width="13" height="13" viewBox="0 0 13 13"><rect x="0.5" y="0.5" width="12" height="12" fill="#fff" stroke="#a8a8a8" stroke-width="1.1"/></svg>
<div class="t" style="left:49px;top:266.19px;font-size:11px;color:#2a2a2a;font-weight:normal;letter-spacing:-0.2px;">Technical</div>
<div class="t" style="left:161px;top:266.19px;font-size:11px;color:#2a2a2a;font-weight:normal;letter-spacing:-0.2px;">Tricentis.Automatio&#8230;</div>
<div style="position:absolute;left:0px;top:275px;width:44px;height:1px;background:#dcdcdc;"></div>
<div style="position:absolute;left:45px;top:275px;width:224px;height:1px;background:#dcdcdc;"></div>
<div style="position:absolute;left:156px;top:257px;width:1px;height:18px;background:#c4c4c4;"></div>
<svg style="position:absolute;left:16px;top:279px" width="13" height="13" viewBox="0 0 13 13"><rect x="0.5" y="0.5" width="12" height="12" fill="#fff" stroke="#a8a8a8" stroke-width="1.1"/></svg>
<div class="t" style="left:49px;top:285.19px;font-size:11px;color:#2a2a2a;font-weight:normal;letter-spacing:-0.2px;">Visible</div>
<div class="t" style="left:161px;top:285.19px;font-size:11px;color:#2a2a2a;font-weight:normal;letter-spacing:-0.2px;">True</div>
<div style="position:absolute;left:0px;top:294px;width:44px;height:1px;background:#dcdcdc;"></div>
<div style="position:absolute;left:45px;top:294px;width:224px;height:1px;background:#dcdcdc;"></div>
<div style="position:absolute;left:156px;top:276px;width:1px;height:18px;background:#c4c4c4;"></div>
<div class="t" style="left:49px;top:304.19px;font-size:11px;color:#2a2a2a;font-weight:normal;letter-spacing:-0.2px;">VisualSelectionPriority</div>
<div class="t" style="left:161px;top:304.19px;font-size:11px;color:#2a2a2a;font-weight:normal;letter-spacing:-0.2px;">Default</div>
<div style="position:absolute;left:0px;top:313px;width:44px;height:1px;background:#dcdcdc;"></div>
<div style="position:absolute;left:45px;top:313px;width:224px;height:1px;background:#dcdcdc;"></div>
<div style="position:absolute;left:156px;top:295px;width:1px;height:18px;background:#c4c4c4;"></div>
<div style="position:absolute;left:0px;top:314px;width:269px;height:28px;background:#efefef;"></div>
<svg style="position:absolute;left:9px;top:325px" width="6" height="6" viewBox="0 0 6 6"><path d="M6 0V6H0Z" fill="#555"/></svg>
<svg style="position:absolute;left:27px;top:320px" width="16" height="16" viewBox="0 0 16 16"><rect x="0.5" y="0.5" width="15" height="15" fill="#fff" stroke="#1e5fb4" stroke-width="1"/><rect x="3" y="3" width="10" height="10" fill="#7fa9dc"/></svg>
<div class="t" style="left:47px;top:327.91px;font-size:11.8px;color:#333;font-weight:bold;letter-spacing:0px;">Technical</div>
<svg style="position:absolute;left:16px;top:346px" width="13" height="13" viewBox="0 0 13 13"><rect x="0.5" y="0.5" width="12" height="12" fill="#fff" stroke="#a8a8a8" stroke-width="1.1"/></svg>
<div class="t" style="left:49px;top:352.19px;font-size:11px;color:#2a2a2a;font-weight:normal;letter-spacing:-0.2px;">ClassName</div>
<div class="t" style="left:161px;top:352.19px;font-size:11px;color:#2a2a2a;font-weight:normal;letter-spacing:-0.2px;"></div>
<div style="position:absolute;left:0px;top:361px;width:44px;height:1px;background:#dcdcdc;"></div>
<div style="position:absolute;left:45px;top:361px;width:224px;height:1px;background:#dcdcdc;"></div>
<div style="position:absolute;left:156px;top:343px;width:1px;height:18px;background:#c4c4c4;"></div>
<svg style="position:absolute;left:16px;top:365px" width="13" height="13" viewBox="0 0 13 13"><rect x="0.5" y="0.5" width="12" height="12" fill="#fff" stroke="#a8a8a8" stroke-width="1.1"/></svg>
<div class="t" style="left:49px;top:371.19px;font-size:11px;color:#2a2a2a;font-weight:normal;letter-spacing:-0.2px;">Disabled</div>
<div class="t" style="left:161px;top:371.19px;font-size:11px;color:#2a2a2a;font-weight:normal;letter-spacing:-0.2px;">False</div>
<div style="position:absolute;left:0px;top:380px;width:44px;height:1px;background:#dcdcdc;"></div>
<div style="position:absolute;left:45px;top:380px;width:224px;height:1px;background:#dcdcdc;"></div>
<div style="position:absolute;left:156px;top:362px;width:1px;height:18px;background:#c4c4c4;"></div>
<svg style="position:absolute;left:16px;top:384px" width="13" height="13" viewBox="0 0 13 13"><rect x="0.5" y="0.5" width="12" height="12" fill="#fff" stroke="#a8a8a8" stroke-width="1.1"/><path d="M2.5 6.5L5 9L10.5 3" fill="none" stroke="#505050" stroke-width="1.2"/></svg>
<div class="t" style="left:49px;top:390.19px;font-size:11px;color:#2a2a2a;font-weight:normal;letter-spacing:-0.2px;">Id</div>
<div class="t" style="left:161px;top:390.19px;font-size:11px;color:#2a2a2a;font-weight:normal;letter-spacing:-0.2px;">search_button</div>
<div style="position:absolute;left:0px;top:399px;width:44px;height:1px;background:#dcdcdc;"></div>
<div style="position:absolute;left:45px;top:399px;width:224px;height:1px;background:#dcdcdc;"></div>
<div style="position:absolute;left:156px;top:381px;width:1px;height:18px;background:#c4c4c4;"></div>
<svg style="position:absolute;left:16px;top:403px" width="13" height="13" viewBox="0 0 13 13"><rect x="0.5" y="0.5" width="12" height="12" fill="#fff" stroke="#a8a8a8" stroke-width="1.1"/></svg>
<div class="t" style="left:49px;top:409.19px;font-size:11px;color:#2a2a2a;font-weight:normal;letter-spacing:-0.2px;">InnerHtml</div>
<div class="t" style="left:161px;top:409.19px;font-size:11px;color:#2a2a2a;font-weight:normal;letter-spacing:-0.2px;">"&lt;i class=""fa fa-se&#8230;</div>
<div style="position:absolute;left:0px;top:418px;width:44px;height:1px;background:#dcdcdc;"></div>
<div style="position:absolute;left:45px;top:418px;width:224px;height:1px;background:#dcdcdc;"></div>
<div style="position:absolute;left:156px;top:400px;width:1px;height:18px;background:#c4c4c4;"></div>
<svg style="position:absolute;left:16px;top:422px" width="13" height="13" viewBox="0 0 13 13"><rect x="0.5" y="0.5" width="12" height="12" fill="#fff" stroke="#a8a8a8" stroke-width="1.1"/></svg>
<div class="t" style="left:49px;top:428.19px;font-size:11px;color:#2a2a2a;font-weight:normal;letter-spacing:-0.2px;">InnerText</div>
<div class="t" style="left:161px;top:428.19px;font-size:11px;color:#2a2a2a;font-weight:normal;letter-spacing:-0.2px;"></div>
<div style="position:absolute;left:0px;top:437px;width:44px;height:1px;background:#dcdcdc;"></div>
<div style="position:absolute;left:45px;top:437px;width:224px;height:1px;background:#dcdcdc;"></div>
<div style="position:absolute;left:156px;top:419px;width:1px;height:18px;background:#c4c4c4;"></div>
</div>
<div style="position:absolute;left:856px;top:627px;width:113px;height:22px;background:#efefef;box-sizing:border-box;border:1px solid #d6d6d6;"></div>
<div class="t c" style="left:812px;top:638.19px;font-size:11px;color:#a3a3a3;letter-spacing:-0.2px;">Make Unique</div>
<div style="position:absolute;left:1036px;top:627px;width:108px;height:22px;background:#efefef;box-sizing:border-box;border:1px solid #adadad;"></div>
<div class="t c" style="left:984px;top:638.19px;font-size:11px;color:#262626;">More</div>
<svg style="position:absolute;left:1132px;top:635px" width="8" height="5" viewBox="0 0 8 5"><path d="M0 0H8L4 4.5Z" fill="#6a6a6a"/></svg>
<div style="position:absolute;left:3px;top:655px;width:1147px;height:1px;background:#d6d6d6;"></div>
<div class="t" style="left:9px;top:665.19px;font-size:11px;color:#1e8c5a;font-weight:normal;letter-spacing:-0.2px;">The selected item is unique.</div>
<div style="position:absolute;left:1146px;top:667px;width:2px;height:2px;background:#4a4a4a;"></div>
<div style="position:absolute;left:1143px;top:670px;width:2px;height:2px;background:#4a4a4a;"></div>
<div style="position:absolute;left:1146px;top:670px;width:2px;height:2px;background:#4a4a4a;"></div>
<div style="position:absolute;left:1140px;top:673px;width:2px;height:2px;background:#4a4a4a;"></div>
<div style="position:absolute;left:1143px;top:673px;width:2px;height:2px;background:#4a4a4a;"></div>
<div style="position:absolute;left:1146px;top:673px;width:2px;height:2px;background:#4a4a4a;"></div>
</body></html>
